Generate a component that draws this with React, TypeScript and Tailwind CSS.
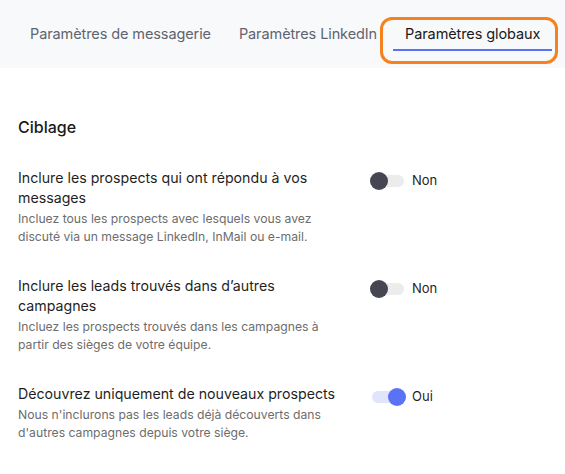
import React from "react";

type Setting = { title: string; description: string; on: boolean };

const settings: Setting[] = [
    {
        title: "Inclure les prospects qui ont répondu à vos messages",
        description: "Incluez tous les prospects avec lesquels vous avez discuté via un message LinkedIn, InMail ou e-mail.",
        on: false,
    },
    {
        title: "Inclure les leads trouvés dans d’autres campagnes",
        description: "Incluez les prospects trouvés dans les campagnes à partir des sièges de votre équipe.",
        on: false,
    },
    {
        title: "Découvrez uniquement de nouveaux prospects",
        description: "Nous n'inclurons pas les leads déjà découverts dans d'autres campagnes depuis votre siège.",
        on: true,
    },
];

function Toggle({ on }: { on: boolean }) {
    return (
        <div className="flex items-center gap-1.5">
            <div className="relative w-[36px] h-[18px] flex items-center">
                <div className={`mx-[2px] w-[32px] h-[12px] rounded-full ${on ? "bg-[#e1e5fb]" : "bg-[#ececec]"}`}></div>
                <div
                    className={`absolute top-0 w-[18px] h-[18px] rounded-full ${on ? "right-0 bg-[#5a72f5]" : "left-0 bg-[#464652]"}`}
                ></div>
            </div>
            <span className="text-[13px] text-[#1f1f1f]">{on ? "Oui" : "Non"}</span>
        </div>
    );
}

export default function App() {
    const tabs = ["Paramètres de messagerie", "Paramètres LinkedIn", "Paramètres globaux"];
    return (
        <div className="w-[565px] h-[474px] bg-white font-['Inter',sans-serif] overflow-hidden">
            <div className="h-[68px] bg-[#f8f9fa] flex items-start pl-[18px] pt-[19px] gap-1">
                {tabs.map((t, i) => {
                    const active = i === 2;
                    return (
                        <div
                            key={t}
                            className={`relative px-3 h-[32px] flex items-start pt-[4px] text-[14.5px] tracking-[-0.1px] ${active ? "text-[#1a1a1a]" : "text-[#5f6470]"}`}
                        >
                            {t}
                            {active && (
                                <>
                                    <div className="absolute left-0 right-0 bottom-0 h-[2px] bg-[#5a72f5]"></div>
                                    <div className="absolute -left-[13px] -right-[6px] -top-[2px] -bottom-[13px] border-[3px] border-[#f5821f] rounded-[12px]"></div>
                                </>
                            )}
                        </div>
                    );
                })}
            </div>

            <div className="pl-[18px] pt-[47px]">
                <h2 className="text-[16px] leading-[24px] font-medium text-[#1a1a1a]">Ciblage</h2>
                <div className="mt-[29px] flex flex-col gap-[30px]">
                    {settings.map((s) => (
                        <div key={s.title} className="flex items-start">
                            <div className="w-[330px]">
                                <p className="text-[14.2px] leading-[20px] text-[#1f1f1f]">{s.title}</p>
                                <p className="mt-[2px] text-[12.2px] leading-[18px] text-[#6d6d6d]">{s.description}</p>
                            </div>
                            <div className="ml-[22px] pt-[3px]">
                                <Toggle on={s.on} />
                            </div>
                        </div>
                    ))}
                </div>
            </div>
        </div>
    );
}
